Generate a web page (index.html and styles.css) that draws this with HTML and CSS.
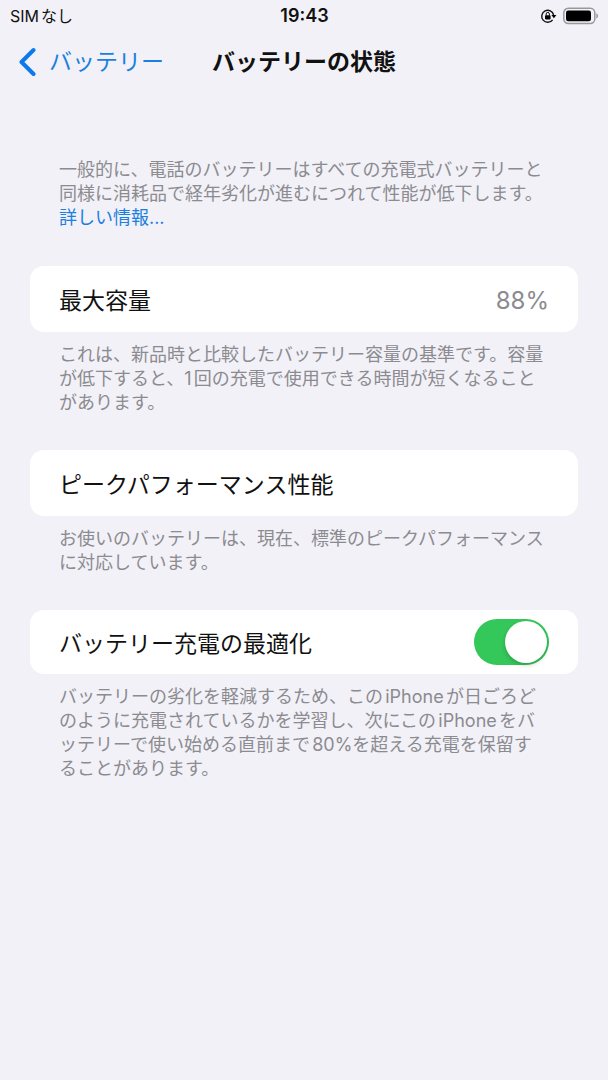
FILE: index.html
```html
<!DOCTYPE html>
<html lang="ja">
<head>
<meta charset="utf-8">
<meta name="viewport" content="width=device-width, initial-scale=1">
<title>バッテリーの状態</title>
<link rel="stylesheet" href="styles.css">
</head>
<body>
<div class="status-bar">
  <span class="carrier">SIMなし</span>
  <time class="clock">19:43</time>
  <span class="indicators">
    <svg class="lock-icon" width="17" height="16" viewBox="0 0 17 16" aria-hidden="true">
      <path d="M12.600 11.800A6 6 0 1 1 13.600 7" fill="none" stroke="#111" stroke-width="1.400"/>
      <path d="M11.400 7h5l-2.500 3.200z"/>
      <rect x="5" y="7.2" width="5.600" height="4.200" rx="0.8"/>
      <path d="M6.200 7.5V6a1.600 1.600 0 0 1 3.200 0v1.500" fill="none" stroke="#111" stroke-width="1"/>
    </svg>
    <svg class="battery-icon" width="36" height="18" viewBox="0 0 36 18" aria-hidden="true">
      <rect x="0.8" y="1.3" width="31" height="15.2" rx="4.5" fill="none" stroke="#99999d" stroke-width="1.5"/>
      <rect x="3" y="3.5" width="25" height="10.8" rx="2.2"/>
      <path d="M33.3 6.2c2.3.7 2.3 4.7 0 5.4z" fill="#99999d"/>
    </svg>
  </span>
</div>
<header class="nav-bar">
  <a class="back" href="#">
    <svg width="18" height="30" viewBox="0 0 18 30" aria-hidden="true">
      <path d="M15.5 3L3.500 15l12 12" fill="none" stroke="#0a7aec" stroke-width="4" stroke-linecap="round" stroke-linejoin="round"/>
    </svg>
    <span>バッテリー</span>
  </a>
  <h1 class="title">バッテリーの状態</h1>
</header>
<main class="content">
  <p class="note intro">一般的に、電話のバッテリーはすべての充電式バッテリーと<br>同様に消耗品で経年劣化が進むにつれて性能が低下します。<br><a class="more" href="#">詳しい情報...</a></p>
  <section class="group">
    <div class="card">
      <h2 class="label">最大容量</h2>
      <span class="value">88%</span>
    </div>
    <p class="note">これは、新品時と比較したバッテリー容量の基準です。容量<br>が低下すると、1回の充電で使用できる時間が短くなること<br>があります。</p>
  </section>
  <section class="group">
    <div class="card">
      <h2 class="label">ピークパフォーマンス性能</h2>
    </div>
    <p class="note">お使いのバッテリーは、現在、標準のピークパフォーマンス<br>に対応しています。</p>
  </section>
  <section class="group">
    <div class="card card-switch">
      <label class="label" for="optimized">バッテリー充電の最適化</label>
      <input class="switch" id="optimized" type="checkbox" role="switch" checked>
    </div>
    <p class="note">バッテリーの劣化を軽減するため、このiPhoneが日ごろど<br>のように充電されているかを学習し、次にこのiPhoneをバ<br>ッテリーで使い始める直前まで80%を超える充電を保留す<br>ることがあります。</p>
  </section>
</main>
</body>
</html>
```
FILE: styles.css
```css
* {
  box-sizing: border-box;
}

body {
  margin: 0;
  min-height: 100vh;
  background: #f2f1f7;
  color: #111;
  font-family: Inter, "Noto Sans CJK JP", sans-serif;
  text-autospace: normal;
}

a {
  text-decoration: none;
}

h1,
h2,
p {
  margin: 0;
}

.status-bar {
  display: grid;
  grid-template-columns: 1fr auto 1fr;
  align-items: center;
  height: 32px;
  padding: 0 9px 0 10px;
  font-size: 16px;
  line-height: 20px;
}

.clock {
  font-size: 18px;
  font-weight: 600;
}

.indicators {
  display: flex;
  justify-content: flex-end;
  align-items: center;
  gap: 6px;
}

.nav-bar {
  display: grid;
  grid-template-columns: 1fr auto 1fr;
  align-items: center;
  height: 60px;
  padding: 0 18px;
  font-size: 23px;
  line-height: 30px;
}

.back {
  display: flex;
  align-items: center;
  gap: 13px;
  color: #1a7fe0;
}

.title {
  font-size: 23px;
  font-weight: 700;
}

.content {
  padding: 66px 30px 40px;
}

.note {
  padding: 11px 0 0 29px;
  color: #8b8b90;
  font-size: 18px;
  line-height: 24px;
}

.intro {
  padding: 0 0 1px 29px;
}

.more {
  color: #1a7fe0;
}

.group {
  margin-top: 35px;
}

.card {
  display: flex;
  justify-content: space-between;
  align-items: center;
  min-height: 66px;
  padding: 0 29px;
  border-radius: 14px;
  background: #fff;
}

.card-switch {
  min-height: 64px;
}

.label {
  padding-top: 3px;
  font-size: 23px;
  font-weight: 400;
  line-height: 32px;
}

.value {
  padding-top: 2px;
  color: #8b8b90;
  font-size: 24px;
}

.switch {
  display: flex;
  justify-content: flex-end;
  appearance: none;
  width: 75px;
  height: 46px;
  margin: 0;
  padding: 2px;
  border-radius: 23px;
  background: #34c759;
}

.switch::before {
  content: "";
  width: 42px;
  height: 42px;
  border-radius: 50%;
  background: #fff;
  box-shadow: 0 2px 4px rgba(0, 0, 0, 0.2);
}

.switch:not(:checked) {
  justify-content: flex-start;
  background: #e9e9eb;
}
```
